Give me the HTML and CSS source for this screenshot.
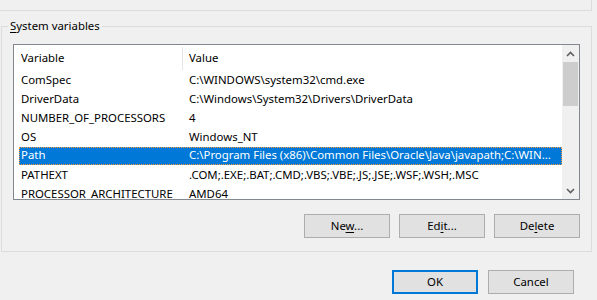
FILE: index.html
```html
<!doctype html>
<html>
<head>
<meta charset="utf-8">
<title>Environment Variables</title>
<link rel="stylesheet" href="styles.css">
</head>
<body>
<div class="prev-box"></div>
<section class="group">
	<div class="group-title"><u>S</u>ystem variables</div>
	<div class="list">
		<div class="list-body">
			<div class="head">
				<div class="head-cell first">Variable</div>
				<div class="head-cell">Value</div>
			</div>
			<div class="row"><span>ComSpec</span><span>C:\WINDOWS\system32\cmd.exe</span></div>
			<div class="row"><span>DriverData</span><span>C:\Windows\System32\Drivers\DriverData</span></div>
			<div class="row"><span>NUMBER_OF_PROCESSORS</span><span>4</span></div>
			<div class="row"><span>OS</span><span>Windows_NT</span></div>
			<div class="row selected"><span>Path</span><span>C:\Program Files (x86)\Common Files\Oracle\Java\javapath;C:\WIN...</span></div>
			<div class="row"><span>PATHEXT</span><span>.COM;.EXE;.BAT;.CMD;.VBS;.VBE;.JS;.JSE;.WSF;.WSH;.MSC</span></div>
			<div class="row"><span>PROCESSOR_ARCHITECTURE</span><span>AMD64</span></div>
		</div>
		<div class="scrollbar">
			<div class="arrow">
				<svg width="9" height="6" viewBox="0 0 9 6"><polyline points="1,5 4.5,1.5 8,5" fill="none" stroke="#606060" stroke-width="1.6"/></svg>
			</div>
			<div class="track"><div class="thumb"></div></div>
			<div class="arrow">
				<svg width="9" height="6" viewBox="0 0 9 6"><polyline points="1,1 4.5,4.5 8,1" fill="none" stroke="#606060" stroke-width="1.6"/></svg>
			</div>
		</div>
	</div>
	<div class="btn-row">
		<a href="javascript:;" class="btn">Ne<u>w</u>...</a>
		<a href="javascript:;" class="btn">Ed<u>i</u>t...</a>
		<a href="javascript:;" class="btn">De<u>l</u>ete</a>
	</div>
</section>
<div class="dialog-btns">
	<a href="javascript:;" class="btn default">OK</a>
	<a href="javascript:;" class="btn">Cancel</a>
</div>
</body>
</html>
```

FILE: styles.css
```css
body {
	margin: 0;
	background: #f0f0f0;
	font: 11.4px / 16px "Noto Sans", "Open Sans", sans-serif;
	color: #000;
	width: 597px;
	height: 300px;
	overflow: hidden;
}
.prev-box {
	width: 591px;
	height: 10px;
	border-right: 1px solid #dcdcdc;
	border-bottom: 1px solid #dcdcdc;
}
.group {
	width: 567px;
	margin: 15px 0 0 1px;
	padding: 0 11px 13px 11px;
	border: 1px solid #dcdcdc;
}
.group-title {
	width: max-content;
	height: 16px;
	margin: -9px 0 0 -5px;
	padding: 0 2px;
	background: #f0f0f0;
}
.group-title u {
	text-decoration-thickness: 1px;
	text-underline-offset: 2px;
}
.list {
	display: flex;
	height: 154px;
	margin-top: 10px;
	border: 1px solid #828790;
	background: #fff;
}
.list-body {
	flex: 1;
	overflow: hidden;
}
.head {
	display: grid;
	grid-template-columns: 169px 1fr;
	height: 26px;
	align-items: center;
}
.head-cell {
	padding-left: 6px;
	height: 23px;
	line-height: 21px;
	white-space: nowrap;
}
.head-cell.first {
	padding-left: 7px;
	border-right: 1px solid #e5e5e5;
}
.row {
	display: grid;
	grid-template-columns: 164px 1fr;
	height: 19px;
	line-height: 17px;
	margin-left: 5px;
	white-space: nowrap;
}
.row span {
	padding-left: 2px;
	overflow: hidden;
}
.row span + span {
	padding-left: 6px;
}
.row.selected {
	height: 18px;
	line-height: 16px;
	margin-bottom: 1px;
	background: #0078d7;
	color: #fff;
	outline: 1px dotted #ff9a3c;
	outline-offset: -1px;
}
.scrollbar {
	width: 17px;
	display: flex;
	flex-direction: column;
	background: #f0f0f0;
}
.arrow {
	height: 17px;
	display: flex;
	align-items: center;
	justify-content: center;
}
.track {
	flex: 1;
}
.thumb {
	height: 44px;
	margin: 0 1px;
	background: #cdcdcd;
}
.btn-row {
	display: flex;
	justify-content: flex-end;
	gap: 9px;
	margin-top: 14px;
}
.btn {
	display: block;
	box-sizing: border-box;
	width: 86px;
	height: 24px;
	line-height: 22px;
	border: 1px solid #adadad;
	background: #e1e1e1;
	color: #000;
	text-align: center;
	text-decoration: none;
}
.btn u {
	text-decoration-thickness: 1px;
	text-underline-offset: 2px;
}
.btn.default {
	border: 2px solid #0078d7;
	line-height: 20px;
}
.dialog-btns {
	display: flex;
	justify-content: flex-end;
	gap: 10px;
	margin-top: 18px;
	padding-right: 23px;
}
```
